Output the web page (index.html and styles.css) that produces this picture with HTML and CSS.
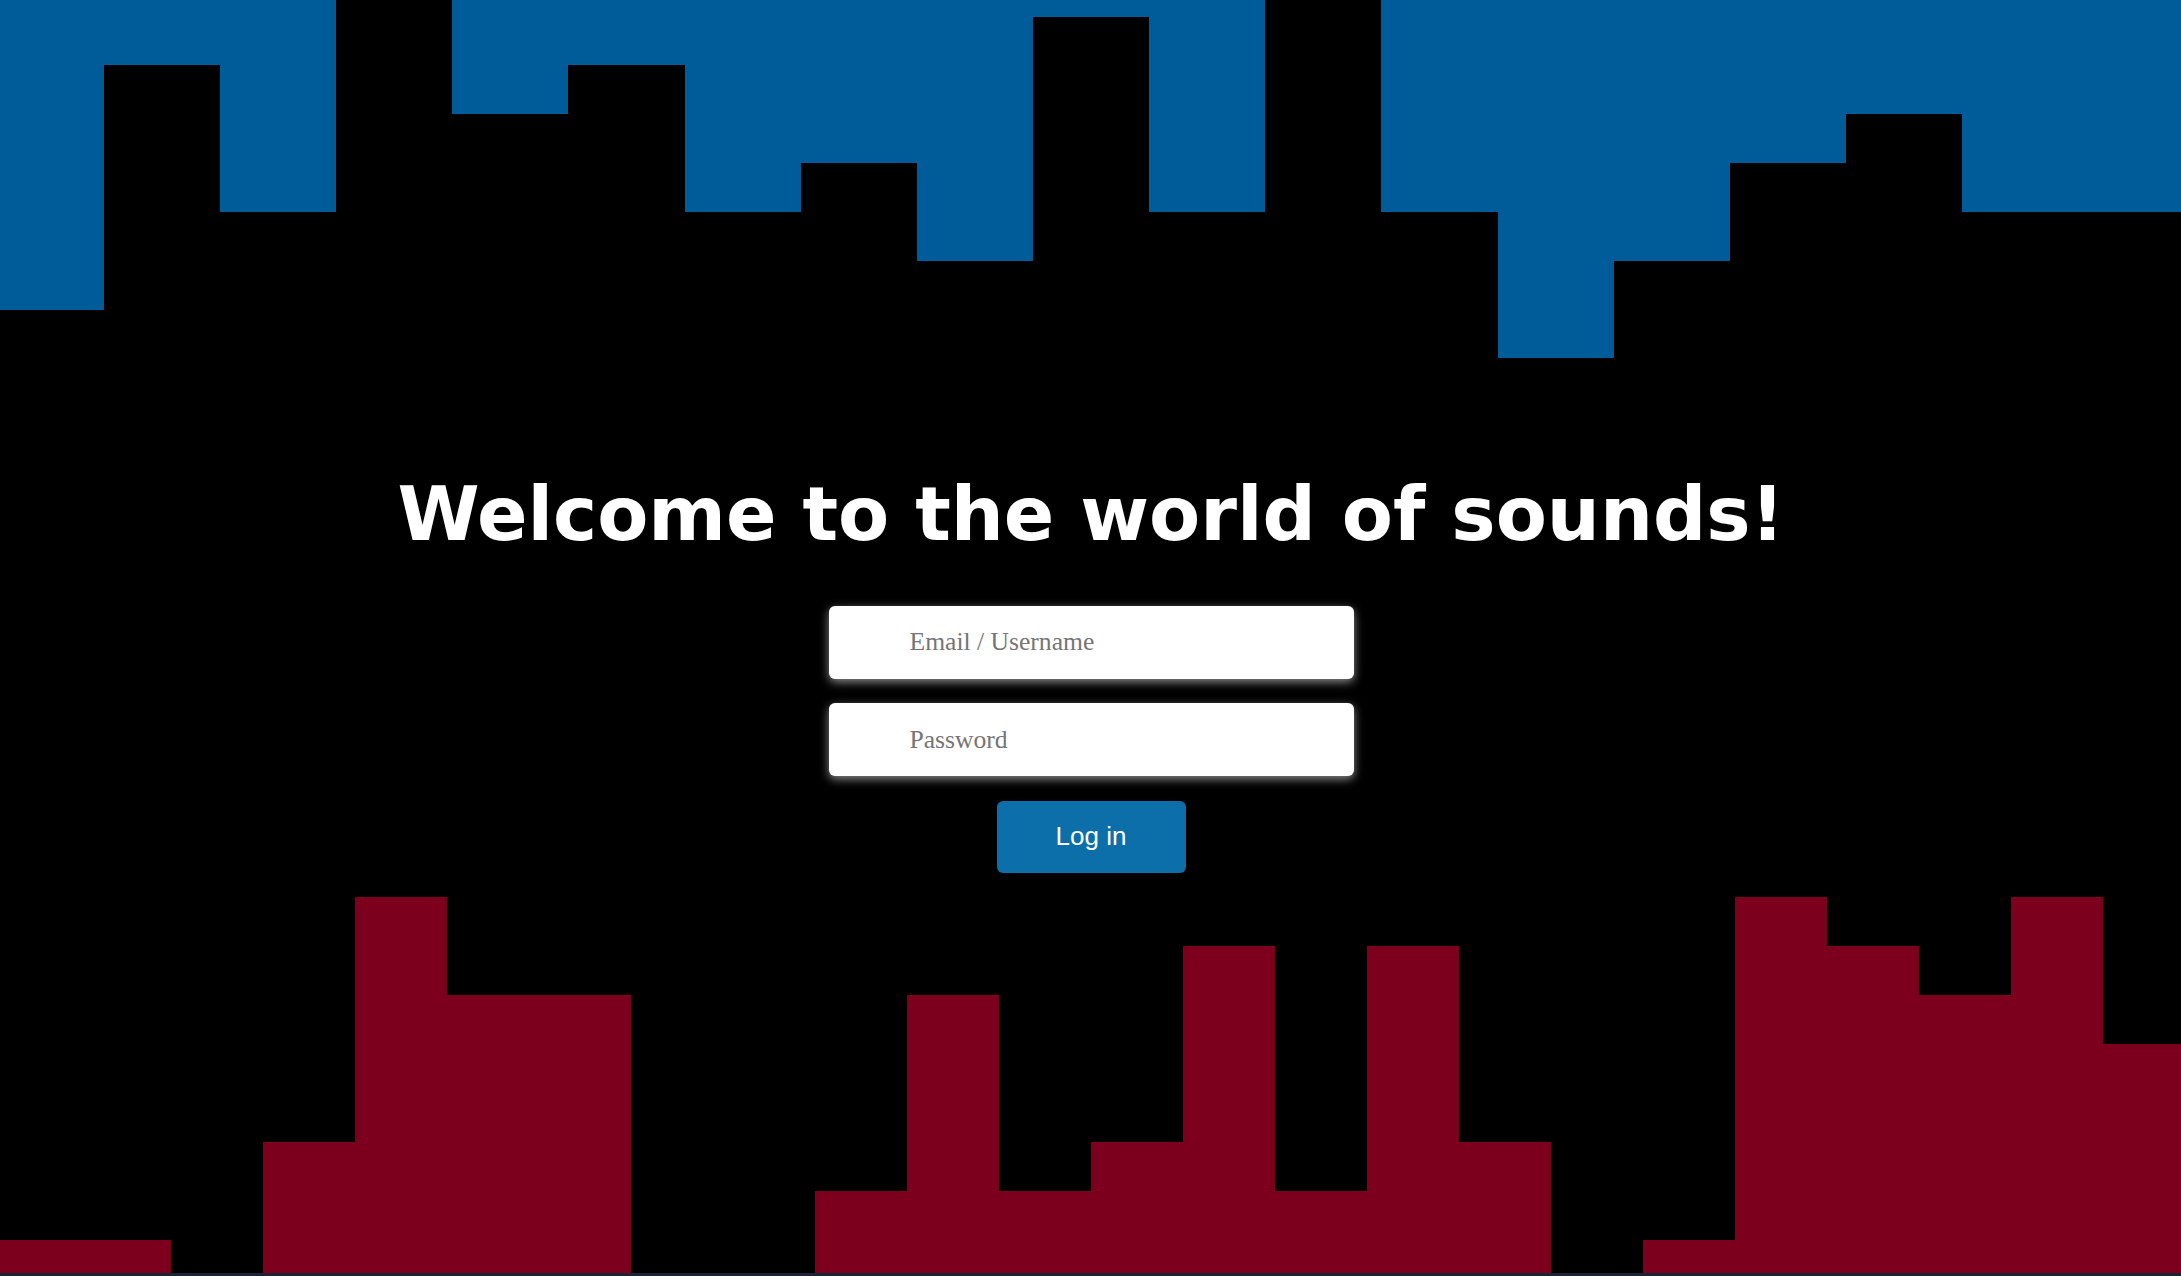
FILE: index.html
```html
<!DOCTYPE html>
<html lang="en">
<head>
<meta charset="utf-8">
<title>Welcome to the world of sounds!</title>
<link rel="stylesheet" href="styles.css">
</head>
<body>
<div class="page">
  <div class="sky">
    <span class="bar t6"></span>
    <span class="bar t1"></span>
    <span class="bar t4"></span>
    <span class="bar tz"></span>
    <span class="bar t2"></span>
    <span class="bar t1"></span>
    <span class="bar t4"></span>
    <span class="bar t3"></span>
    <span class="bar t5"></span>
    <span class="bar t0"></span>
    <span class="bar t4"></span>
    <span class="bar tz"></span>
    <span class="bar t4"></span>
    <span class="bar t7"></span>
    <span class="bar t5"></span>
    <span class="bar t3"></span>
    <span class="bar t2"></span>
    <span class="bar t4"></span>
    <span class="bar t4"></span>
  </div>

  <main class="login">
    <h1 class="title">Welcome to the world of sounds!</h1>
    <form class="form" onsubmit="return false">
      <input class="field" type="text" placeholder="Email / Username">
      <input class="field" type="password" placeholder="Password">
      <button class="submit" type="submit">Log in</button>
    </form>
  </main>

  <div class="ground">
    <span class="bar b0"></span>
    <span class="bar b0"></span>
    <span class="bar bz"></span>
    <span class="bar b2"></span>
    <span class="bar b7"></span>
    <span class="bar b5"></span>
    <span class="bar b5"></span>
    <span class="bar bz"></span>
    <span class="bar bz"></span>
    <span class="bar b1"></span>
    <span class="bar b5"></span>
    <span class="bar b1"></span>
    <span class="bar b2"></span>
    <span class="bar b6"></span>
    <span class="bar b1"></span>
    <span class="bar b6"></span>
    <span class="bar b2"></span>
    <span class="bar bz"></span>
    <span class="bar b0"></span>
    <span class="bar b7"></span>
    <span class="bar b6"></span>
    <span class="bar b5"></span>
    <span class="bar b7"></span>
    <span class="bar b4"></span>
  </div>
  <div class="floor-line"></div>
</div>
</body>
</html>
```

FILE: styles.css
```css
html, body {
  margin: 0;
  padding: 0;
  background: #000;
}

.page {
  height: 100vh;
  display: flex;
  flex-direction: column;
  overflow: hidden;
}

/* top equalizer (hangs from the top) */
.sky {
  flex: 0 0 358.45px;
  display: flex;
  justify-content: center;
  align-items: flex-start;
  padding-left: 1px;
}
.sky .bar {
  flex: 0 0 116.15px;
  background: #005c99;
}
.t0 { height: 16.5px; }
.t1 { height: 65.35px; }
.t2 { height: 114.2px; }
.t3 { height: 163.05px; }
.t4 { height: 211.9px; }
.t5 { height: 260.75px; }
.t6 { height: 309.6px; }
.t7 { height: 358.45px; }
.sky .tz { height: 0; }

/* centre login block */
.login {
  flex: 1 1 auto;
  display: flex;
  flex-direction: column;
  align-items: center;
  padding-top: 112.5px;
  padding-left: 1px;
}

.title {
  margin: 0;
  color: #fff;
  font-family: "DejaVu Sans", Verdana, sans-serif;
  font-weight: bold;
  font-size: 74.5px;
  line-height: normal;
  white-space: nowrap;
}

.form {
  margin: 48px 0 0;
  display: flex;
  flex-direction: column;
  align-items: center;
  gap: 24.3px;
}

.field {
  box-sizing: border-box;
  width: 525px;
  height: 73px;
  border: none;
  border-radius: 6px;
  background: #fff;
  padding: 0 0 0 81px;
  font-family: "Liberation Serif", "Times New Roman", serif;
  font-size: 25.6px;
  color: #222;
  outline: none;
  box-shadow: 0 3px 10px rgba(255, 255, 255, 0.55);
}
.field::placeholder {
  color: #757575;
}

.submit {
  box-sizing: border-box;
  width: 189px;
  height: 72.3px;
  border: none;
  border-radius: 6px;
  background: #0c6fa9;
  color: #fff;
  font-family: "Liberation Sans", Arial, sans-serif;
  font-size: 26px;
  cursor: pointer;
  padding: 0;
}

/* bottom equalizer (stands on the floor) */
.ground {
  flex: 0 0 376.3px;
  display: flex;
  justify-content: center;
  align-items: flex-end;
  padding-left: 1px;
}
.ground .bar {
  flex: 0 0 91.98px;
  background: #7c001e;
}
.b0 { height: 33.3px; }
.b1 { height: 82.3px; }
.b2 { height: 131.3px; }
.b3 { height: 180.3px; }
.b4 { height: 229.3px; }
.b5 { height: 278.3px; }
.b6 { height: 327.3px; }
.b7 { height: 376.3px; }
.ground .bz { height: 0; }

.floor-line {
  flex: 0 0 3px;
  background: #1c2433;
}
```
